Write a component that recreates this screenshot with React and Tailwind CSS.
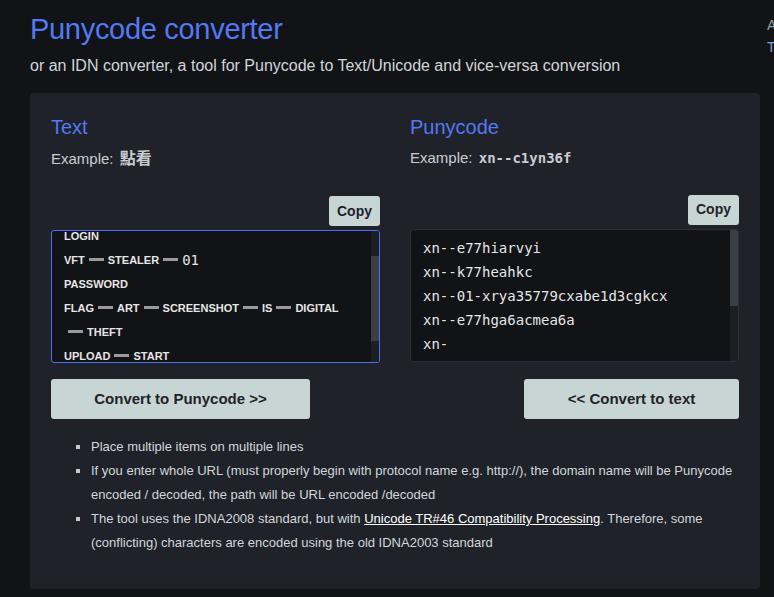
import React from "react";

const Dash = () => (
  <span className="inline-block align-middle w-[15px] h-[3px] bg-[#9a9a9a] mx-[4px] mb-[2px]" />
);

const textLines = [
  ["LOGIN"],
  ["VFT", "STEALER", "01"],
  ["PASSWORD"],
  ["FLAG", "ART", "SCREENSHOT", "IS", "DIGITAL"],
  ["", "THEFT"],
  ["UPLOAD", "START"],
];

const punyLines = [
  "xn--e77hiarvyi",
  "xn--k77heahkc",
  "xn--01-xrya35779cxabe1d3cgkcx",
  "xn--e77hga6acmea6a",
  "xn-",
];

const CopyButton = () => (
  <div className="flex justify-end mb-[4px]">
    <button className="bg-[#c8d5d5] text-[#1f2329] text-[14px] font-bold px-[8px] h-[30px] rounded-[3px]">
      Copy
    </button>
  </div>
);

const Scrollbar = ({ top, height }) => (
  <div className="absolute right-0 top-0 bottom-0 w-[8px] bg-[#1c1f24]">
    <div className="absolute left-0 right-0 bg-[#3a3e45]" style={{ top, height }} />
  </div>
);

export default function App() {
  return (
    <div
      className="min-h-[597px] w-[774px] bg-[#111317] text-[#d4d8dc] overflow-hidden flex"
      style={{ fontFamily: '"Liberation Sans", "Noto Sans CJK TC", sans-serif' }}
    >
      <div className="pl-[30px] w-[760px] shrink-0">
        <h1 className="text-[29px] leading-none text-[#5479f2] pt-[15px] tracking-[-0.3px]">Punycode converter</h1>
        <p className="text-[16px] mt-[10px] text-[#d2d6da]">
          or an IDN converter, a tool for Punycode to Text/Unicode and vice-versa conversion
        </p>

        <div className="mt-[15px] bg-[#1f2329] rounded-[4px] px-[21px] pt-[24px] pb-[30px] h-[496px]">
          <div className="grid grid-cols-2 gap-[30px]">
            <div>
              <h2 className="text-[20px] leading-none text-[#5479f2]">Text</h2>
              <div className="mt-[10px] text-[15px] text-[#c9cdd1]">
                Example:{" "}
                <span className="font-bold text-[16px] ml-[2px]">點看</span>
              </div>
              <div className="mt-[25px]">
                <CopyButton />
                <div className="relative h-[133px] bg-[#111317] border border-[#4b6ef0] rounded-[3px] overflow-hidden">
                  <div className="pl-[12px] pt-0 -mt-[7px] text-[11px] font-bold text-[#e6e6e6] leading-[24px]">
                    {textLines.map((parts, i) => (
                      <div key={i} className="flex items-center h-[24px]">
                        {parts.map((p, j) => (
                          <React.Fragment key={j}>
                            {j > 0 && <Dash />}
                            {p === "01" ? (
                              <span className="font-normal text-[14px]" style={{ fontFamily: '"DejaVu Sans Mono", monospace' }}>01</span>
                            ) : (
                              <span>{p}</span>
                            )}
                          </React.Fragment>
                        ))}
                      </div>
                    ))}
                  </div>
                  <Scrollbar top={25} height={85} />
                </div>
              </div>
            </div>

            <div>
              <h2 className="text-[20px] leading-none text-[#5479f2]">Punycode</h2>
              <div className="mt-[10px] text-[15px] text-[#c9cdd1]">
                Example:{" "}
                <span
                  className="font-bold text-[14px] ml-[2px]"
                  style={{ fontFamily: '"DejaVu Sans Mono", monospace' }}
                >
                  xn--c1yn36f
                </span>
              </div>
              <div className="mt-[25px]">
                <CopyButton />
                <div className="relative h-[133px] bg-[#111317] border border-[#2c3036] rounded-[3px] overflow-hidden">
                  <div
                    className="pl-[12px] pt-[6px] text-[14px] text-[#e6e6e6] leading-[24px]"
                    style={{ fontFamily: '"DejaVu Sans Mono", monospace' }}
                  >
                    {punyLines.map((l) => (
                      <div key={l}>{l}</div>
                    ))}
                  </div>
                  <Scrollbar top={0} height={76} />
                </div>
              </div>
            </div>
          </div>

          <div className="flex justify-between mt-[16px]">
            <button className="w-[259px] h-[40px] bg-[#c8d5d5] text-[#1f2329] rounded-[3px] font-bold text-[15px]">
              Convert to Punycode &gt;&gt;
            </button>
            <button className="w-[215px] h-[40px] bg-[#c8d5d5] text-[#1f2329] rounded-[3px] font-bold text-[15px]">
              &lt;&lt; Convert to text
            </button>
          </div>

          <ul className="mt-[16px] pl-[40px] text-[13px] leading-[24px] text-[#d2d6da] list-[square] marker:text-[#c8c8c8]">
            <li>Place multiple items on multiple lines</li>
            <li>
              If you enter whole URL (must properly begin with protocol name e.g. http://), the domain name will be
              Punycode encoded / decoded, the path will be URL encoded /decoded
            </li>
            <li>
              The tool uses the IDNA2008 standard, but with{" "}
              <a className="underline text-white">Unicode TR#46 Compatibility Processing</a>. Therefore, some
              (conflicting) characters are encoded using the old IDNA2003 standard
            </li>
          </ul>
        </div>
      </div>
      <div className="pl-[7px] pt-[14px] text-[14px] leading-[22px] text-[#8aa0d8] whitespace-nowrap">
        <div className="text-[#9aa0a8]">A</div>
        <div>T</div>
      </div>
    </div>
  );
}
